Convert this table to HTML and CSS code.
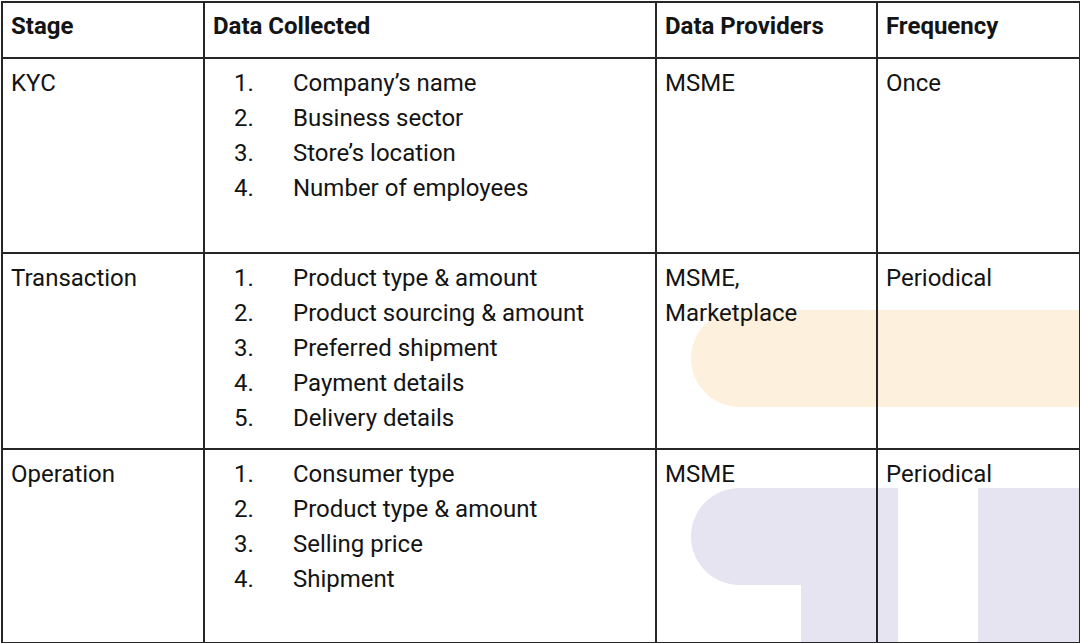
FILE: index.html
```html
<!DOCTYPE html>
<html lang="en">
<head>
<meta charset="utf-8">
<title>Data collection stages</title>
<link rel="stylesheet" href="styles.css">
</head>
<body>
<div class="page">
  <svg class="watermark" width="1080" height="643" viewBox="0 0 1080 643" aria-hidden="true">
    <rect x="691" y="310" width="440" height="97" rx="48.5" fill="#fdf1de"/>
    <path d="M739.5 488 H898 V643 H801 V585 H739.5 A48.5 48.5 0 0 1 739.5 488 Z" fill="#e5e4f0"/>
    <path d="M978 488 H1080 V643 H978 Z" fill="#e5e4f0"/>
  </svg>
  <table class="grid">
    <colgroup>
      <col class="c1"><col class="c2"><col class="c3"><col class="c4">
    </colgroup>
    <thead>
      <tr class="head">
        <th>Stage</th>
        <th>Data Collected</th>
        <th>Data Providers</th>
        <th>Frequency</th>
      </tr>
    </thead>
    <tbody>
      <tr class="r1">
        <td>KYC</td>
        <td>
          <ol class="items">
            <li><span class="n">1.</span><span>Company’s name</span></li>
            <li><span class="n">2.</span><span>Business sector</span></li>
            <li><span class="n">3.</span><span>Store’s location</span></li>
            <li><span class="n">4.</span><span>Number of employees</span></li>
          </ol>
        </td>
        <td>MSME</td>
        <td>Once</td>
      </tr>
      <tr class="r2">
        <td>Transaction</td>
        <td>
          <ol class="items">
            <li><span class="n">1.</span><span>Product type &amp; amount</span></li>
            <li><span class="n">2.</span><span>Product sourcing &amp; amount</span></li>
            <li><span class="n">3.</span><span>Preferred shipment</span></li>
            <li><span class="n">4.</span><span>Payment details</span></li>
            <li><span class="n">5.</span><span>Delivery details</span></li>
          </ol>
        </td>
        <td>MSME,<br>Marketplace</td>
        <td>Periodical</td>
      </tr>
      <tr class="r3">
        <td>Operation</td>
        <td>
          <ol class="items">
            <li><span class="n">1.</span><span>Consumer type</span></li>
            <li><span class="n">2.</span><span>Product type &amp; amount</span></li>
            <li><span class="n">3.</span><span>Selling price</span></li>
            <li><span class="n">4.</span><span>Shipment</span></li>
          </ol>
        </td>
        <td>MSME</td>
        <td>Periodical</td>
      </tr>
    </tbody>
  </table>
</div>
</body>
</html>
```

FILE: styles.css
```css
html, body {
  margin: 0;
  padding: 0;
  background: #ffffff;
}

.page {
  position: relative;
  width: 1080px;
  height: 643px;
  overflow: hidden;
  font-family: Roboto, "Noto Sans", "Liberation Sans", sans-serif;
  color: #141414;
}

.watermark {
  position: absolute;
  left: 0;
  top: 0;
  z-index: 0;
}

.grid {
  position: relative;
  z-index: 1;
  border-collapse: collapse;
  table-layout: fixed;
  width: 1078px;
  margin: 1px 0 0 1px;
  background: transparent;
}

.c1 { width: 202px; }
.c2 { width: 452px; }
.c3 { width: 221px; }
.c4 { width: 203px; }

.grid th,
.grid td {
  border: 2px solid #262626;
  text-align: left;
  vertical-align: top;
  font-size: 24px;
  line-height: 35px;
  padding: 0 8px 0 8px;
}

.grid th {
  font-weight: 700;
  height: 56px;
  padding-top: 6px;
  box-sizing: border-box;
}

.grid td {
  font-weight: 400;
  padding-top: 7px;
  box-sizing: border-box;
}

.r1 td { height: 195px; }
.r2 td { height: 196px; }
.r3 td { height: 194px; }

.items {
  list-style: none;
  margin: 0;
  padding: 0 0 0 21px;
}

.items li {
  display: grid;
  grid-template-columns: 59px 1fr;
}
```
